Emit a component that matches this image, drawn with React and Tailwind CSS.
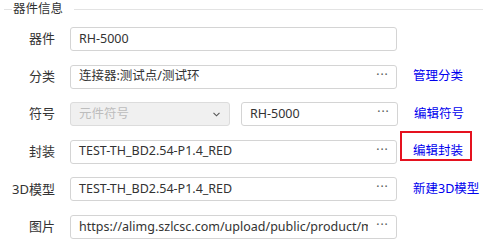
import React from 'react';

const font = { fontFamily: '"Segoe UI", "Noto Sans", "Noto Sans CJK SC", sans-serif' };

function Dots() {
  return (
    <span className="flex w-[28px] shrink-0 items-center justify-center text-[#555] text-[12px] leading-none tracking-[1px] pb-[4px] pl-[1px]">
      ···
    </span>
  );
}

function TextBox({ value, width = 'w-[327px]', dots = true }) {
  return (
    <div className={`flex h-[24px] ${width} items-center rounded-[3px] border border-[#d4d4d4] bg-white`}>
      <div className="min-w-0 flex-1 overflow-hidden whitespace-nowrap pl-[8px] text-[12.5px] text-[#333]">
        {value}
      </div>
      {dots && <Dots />}
    </div>
  );
}

function Row({ label, children, link, boxed }) {
  return (
    <div className="flex h-[24px] items-center">
      <div className="w-[55px] shrink-0 text-right text-[13px] text-[#333]">{label}</div>
      <div className="ml-[15px] flex items-center gap-[11px]">{children}</div>
      {link && (
        <div className="relative ml-[16px] text-[12.5px] text-[#0000ee]">
          {link}
          {boxed && (
            <div className="absolute left-[-13px] top-[-11px] h-[30px] w-[72px] border-2 border-[#e5121f]" />
          )}
        </div>
      )}
    </div>
  );
}

export default function App() {
  return (
    <div className="h-[246px] w-[483px] overflow-hidden bg-white" style={font}>
      {/* legend */}
      <div className="flex h-[18px] items-center pt-[1px]">
        <div className="ml-[4px] h-px w-[8px] bg-[#e3e3e3]" />
        <div className="px-[1px] text-[12.5px] leading-none text-[#333]">器件信息</div>
        <div className="ml-[10px] h-px flex-1 bg-[#e3e3e3]" />
      </div>

      <div className="mt-[9px] flex flex-col gap-[13.6px]">
        <Row label="器件">
          <TextBox value="RH-5000" dots={false} />
        </Row>
        <Row label="分类" link="管理分类">
          <TextBox value="连接器:测试点/测试环" />
        </Row>
        <Row label="符号" link="编辑符号">
          <div className="flex h-[24px] w-[160px] items-center rounded-[3px] border border-[#dcdcdc] bg-[#f0f0f0]">
            <div className="flex-1 pl-[8px] text-[12.5px] text-[#bdbdbd]">元件符号</div>
            <svg className="mr-[9px]" width="7" height="5" viewBox="0 0 7 5">
              <path d="M0.5 0.8 L3.5 3.8 L6.5 0.8" fill="none" stroke="#555" strokeWidth="1.1" />
            </svg>
          </div>
          <TextBox value="RH-5000" width="w-[157px]" />
        </Row>
        <Row label="封装" link="编辑封装" boxed>
          <TextBox value="TEST-TH_BD2.54-P1.4_RED" />
        </Row>
        <Row label="3D模型" link="新建3D模型">
          <TextBox value="TEST-TH_BD2.54-P1.4_RED" />
        </Row>
        <Row label="图片">
          <TextBox value="https://alimg.szlcsc.com/upload/public/product/mid/20200101.jpg" />
        </Row>
      </div>
    </div>
  );
}
